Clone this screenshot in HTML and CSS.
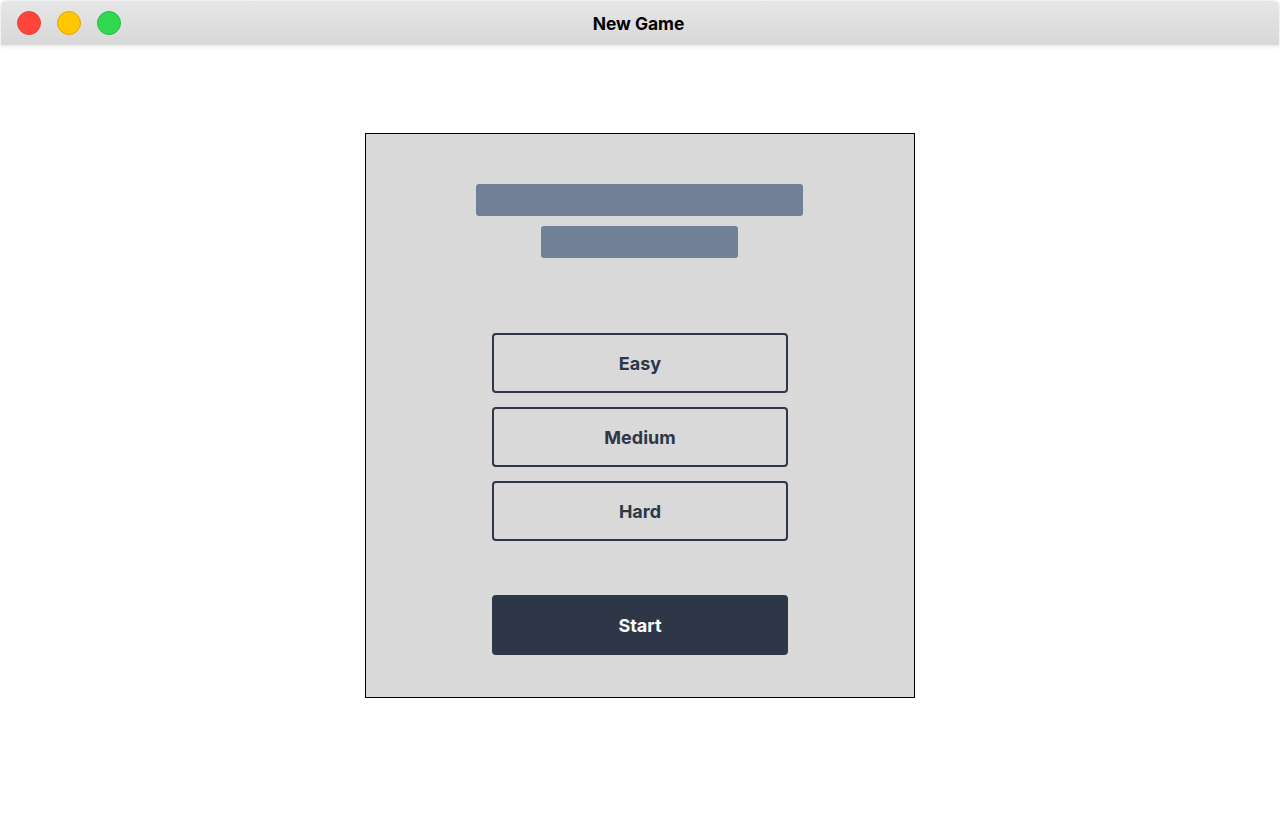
FILE: index.html
```html
<!DOCTYPE html>
<html>
<head>
<meta charset="utf-8">
<link rel="stylesheet" href="styles.css">
</head>
<body>
<div class="titlebar">
  <div class="lights">
    <span class="light red"></span>
    <span class="light yellow"></span>
    <span class="light green"></span>
  </div>
  <div class="title">New Game</div>
</div>
<main class="stage">
  <section class="panel">
    <div class="skeleton">
      <div class="bar bar-long"></div>
      <div class="bar bar-short"></div>
    </div>
    <div class="options">
      <button class="option">Easy</button>
      <button class="option">Medium</button>
      <button class="option">Hard</button>
    </div>
    <button class="start">Start</button>
  </section>
</main>
</body>
</html>
```
FILE: styles.css
```css
* { box-sizing: border-box; }
html, body { margin: 0; padding: 0; background: #ffffff; }
body { font-family: Inter, "Noto Sans", sans-serif; width: 1280px; height: 832px; overflow: hidden; }

.titlebar {
  position: relative;
  height: 45px;
  margin: 0 1px;
  background: linear-gradient(#e6e6e6, #d8d8d8);
  border-top: 1px solid #f2f2f2;
  border-radius: 6px 6px 0 0;
  box-shadow: 0 1px 5px rgba(0,0,0,0.12);
  display: flex;
  align-items: center;
  justify-content: center;
}
.lights {
  position: absolute;
  left: 16px;
  top: 10px;
  display: flex;
  gap: 16px;
}
.light {
  width: 24px;
  height: 24px;
  border-radius: 50%;
  display: block;
}
.red { background: #ff453a; border: 1px solid #e0443a; }
.yellow { background: #ffc700; border: 1px solid #e0a800; }
.green { background: #2fd84f; border: 1px solid #28b845; }
.title {
  font-weight: 700;
  font-size: 17.4px;
  color: #000;
  margin-left: -3px;
  margin-top: 1px;
}

.stage {
  display: flex;
  justify-content: center;
  padding-top: 88px;
}
.panel {
  width: 550px;
  height: 565px;
  border: 1px solid #000;
  background: #d9d9d9;
  display: flex;
  flex-direction: column;
  align-items: center;
  padding-top: 50px;
}
.skeleton {
  display: flex;
  flex-direction: column;
  align-items: center;
  gap: 10px;
  margin-right: 1px;
}
.bar {
  height: 32px;
  background: #718096;
  border-radius: 3px;
}
.bar-long { width: 327px; }
.bar-short { width: 197px; }

.options {
  margin-top: 75px;
  display: flex;
  flex-direction: column;
  gap: 14px;
}
.option, .start {
  width: 296px;
  height: 60px;
  border-radius: 4px;
  font-family: Inter, "Noto Sans", sans-serif;
  font-weight: 700;
  font-size: 18px;
  padding: 0;
  cursor: pointer;
}
.option {
  background: transparent;
  border: 2px solid #2d3748;
  color: #2d3748;
}
.start {
  margin-top: 54px;
  border: none;
  background: #2d3748;
  color: #ffffff;
}
```
